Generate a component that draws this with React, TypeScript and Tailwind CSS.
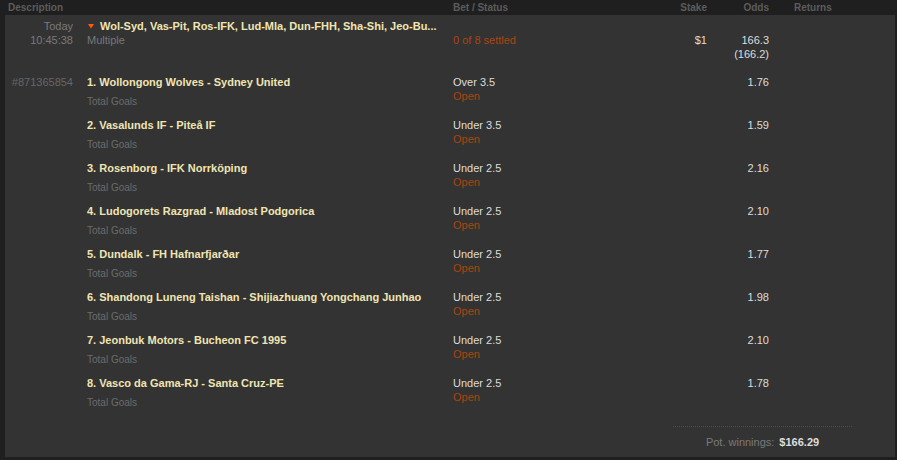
import React from "react";

const legs = [
  { t: "1. Wollongong Wolves - Sydney United", bet: "Over 3.5", odds: "1.76", id: "#871365854" },
  { t: "2. Vasalunds IF - Piteå IF", bet: "Under 3.5", odds: "1.59" },
  { t: "3. Rosenborg - IFK Norrköping", bet: "Under 2.5", odds: "2.16" },
  { t: "4. Ludogorets Razgrad - Mladost Podgorica", bet: "Under 2.5", odds: "2.10" },
  { t: "5. Dundalk - FH Hafnarfjarðar", bet: "Under 2.5", odds: "1.77" },
  { t: "6. Shandong Luneng Taishan - Shijiazhuang Yongchang Junhao", bet: "Under 2.5", odds: "1.98" },
  { t: "7. Jeonbuk Motors - Bucheon FC 1995", bet: "Under 2.5", odds: "2.10" },
  { t: "8. Vasco da Gama-RJ - Santa Cruz-PE", bet: "Under 2.5", odds: "1.78" },
];

const grid = "grid grid-cols-[82px_366px_207px_47px_62px_126px]";

export default function App() {
  return (
    <div
      className="w-[897px] h-[460px] bg-[#1f1f1f] overflow-hidden text-[11px] leading-[14px]"
      style={{ fontFamily: '"Liberation Sans", Arial, Helvetica, sans-serif' }}
    >
      {/* header */}
      <div className={`${grid} ml-[5px] h-[15px] items-center text-[10px] font-bold text-[#5c5c5c] leading-[15px]`}>
        <div className="col-span-2 pl-[3px]">Description</div>
        <div>Bet / Status</div>
        <div className="text-right">Stake</div>
        <div className="text-right">Odds</div>
        <div className="pl-[25px]">Returns</div>
      </div>

      {/* panel */}
      <div className="ml-[5px] w-[890px] h-[442px] bg-[#333333] pt-[4px]">
        {/* multiple row */}
        <div className={grid}>
          <div className="text-right pr-[14px] text-[#7a7a7a]">
            <div>Today</div>
            <div>10:45:38</div>
          </div>
          <div>
            <div className="flex items-center font-bold text-[#f0e5b2] whitespace-nowrap">
              <svg width="6" height="5" viewBox="0 0 6 5" className="mr-[6px] ml-[1px]">
                <polygon points="0,0 6,0 3,4.5" fill="#ff5c00" />
              </svg>
              <span>Wol-Syd, Vas-Pit, Ros-IFK, Lud-Mla, Dun-FHH, Sha-Shi, Jeo-Bu...</span>
            </div>
            <div className="text-[#777777]">Multiple</div>
          </div>
          <div>
            <div>&nbsp;</div>
            <div className="text-[#a8460f]">0 of 8 settled</div>
          </div>
          <div className="text-right text-[#dddddd]">
            <div>&nbsp;</div>
            <div>$1</div>
          </div>
          <div className="text-right text-[#dddddd]">
            <div>&nbsp;</div>
            <div>166.3</div>
            <div>(166.2)</div>
          </div>
          <div />
        </div>

        {/* legs */}
        <div className="mt-[14px]">
          {legs.map((l, i) => (
            <div key={i} className={`${grid} h-[43px]`}>
              <div className="text-right pr-[14px] text-[#666666]">{l.id ?? ""}</div>
              <div>
                <div className="font-bold text-[#f0e5b2] whitespace-nowrap">{l.t}</div>
                <div className="mt-[6px] text-[10px] text-[#6c6c6c]">Total Goals</div>
              </div>
              <div>
                <div className="text-[#dddddd]">{l.bet}</div>
                <div className="text-[#a8460f]">Open</div>
              </div>
              <div />
              <div className="text-right text-[#dddddd]">{l.odds}</div>
              <div />
            </div>
          ))}
        </div>

        {/* footer */}
        <div className="mt-[7px] ml-[668px] w-[179px] border-t border-dotted border-[#4c4c4c] pt-[8px] text-center">
          <span className="text-[#7a7a7a]">Pot. winnings:</span>
          <span className="ml-[5px] font-bold text-[#dddddd]">$166.29</span>
        </div>
      </div>
    </div>
  );
}
